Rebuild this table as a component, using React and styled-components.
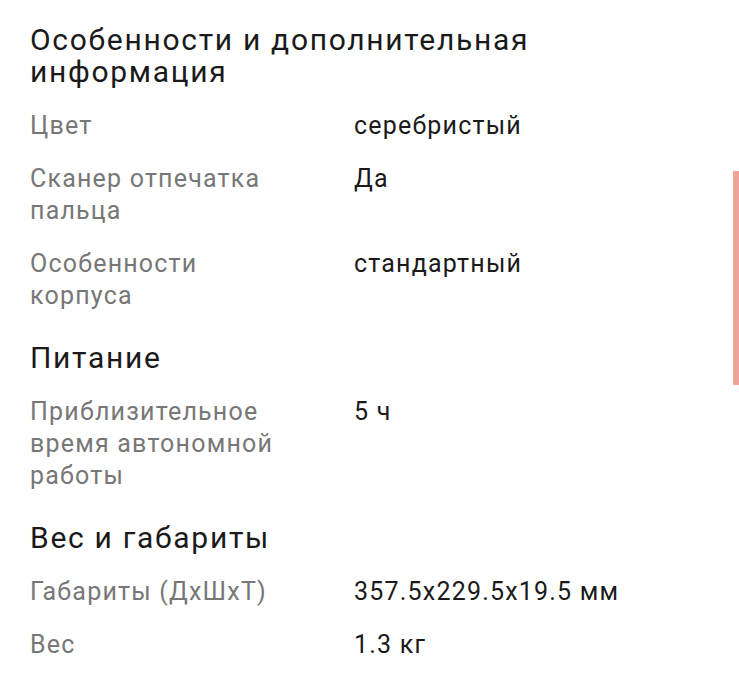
import React from "react";
import styled, { createGlobalStyle } from "styled-components";

const sections = [
  {
    title: "Особенности и дополнительная информация",
    rows: [
      ["Цвет", "серебристый"],
      ["Сканер отпечатка пальца", "Да"],
      ["Особенности корпуса", "стандартный"],
    ],
  },
  {
    title: "Питание",
    rows: [["Приблизительное время автономной работы", "5 ч"]],
  },
  {
    title: "Вес и габариты",
    rows: [
      ["Габариты (ДхШхТ)", "357.5x229.5x19.5 мм"],
      ["Вес", "1.3 кг"],
    ],
  },
];

const App = () => {
  return (
    <>
      <GlobalStyle />
      <Page>
        {sections.map((section) => (
          <Section key={section.title}>
            <Title>{section.title}</Title>
            {section.rows.map(([label, value]) => (
              <Row key={label}>
                <Label>{label}</Label>
                <Value>{value}</Value>
              </Row>
            ))}
          </Section>
        ))}
      </Page>
      <ScrollThumb />
    </>
  );
};

export default App;

const GlobalStyle = createGlobalStyle`
  body {
    margin: 0;
    background: #ffffff;
    font-family: Roboto, "Noto Sans", sans-serif;
  }
`;

const Page = styled.div`
  padding: 24px 30px 0 30px;
  display: flex;
  flex-direction: column;
  gap: 30px;
`;

const Section = styled.div`
  display: flex;
  flex-direction: column;
  gap: 21px;
`;

const Title = styled.h2`
  margin: 0 0 1px 0;
  max-width: 540px;
  font-size: 30px;
  line-height: 32px;
  font-weight: 400;
  letter-spacing: 1.7px;
  color: #1a1a1a;
`;

const Row = styled.div`
  display: grid;
  grid-template-columns: 324px 1fr;
`;

const Label = styled.div`
  padding-right: 60px;
  font-size: 25px;
  line-height: 32px;
  letter-spacing: 1.2px;
  color: #777777;
`;

const Value = styled.div`
  font-size: 25px;
  line-height: 32px;
  letter-spacing: 1.2px;
  color: #1a1a1a;
`;

const ScrollThumb = styled.div`
  position: fixed;
  right: 0;
  top: 171px;
  width: 6px;
  height: 214px;
  background: #f0a39b;
`;
